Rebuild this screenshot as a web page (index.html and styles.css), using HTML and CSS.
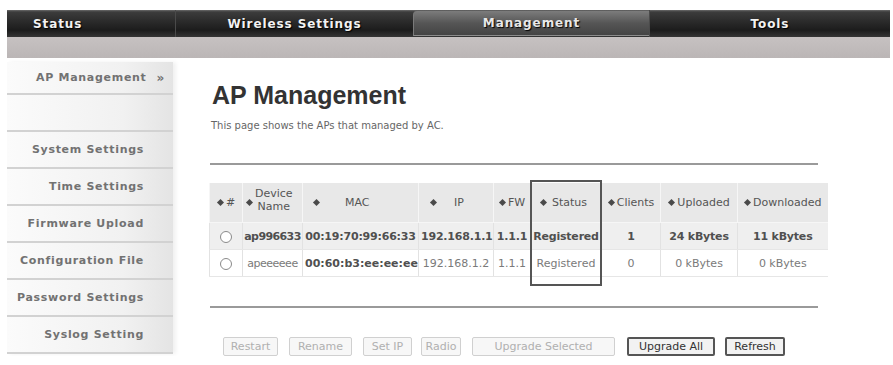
FILE: index.html
```html
<!DOCTYPE html>
<html lang="en">

<head>
    <meta charset="UTF-8">
    <title>AP Management</title>
    <link rel="stylesheet" href="styles.css">
</head>

<body>
    <div class="page">
        <div class="topnav">
            <div class="tab first">Status</div>
            <div class="tab">Wireless Settings</div>
            <div class="tab current">Management</div>
            <div class="tab">Tools</div>
        </div>
        <div class="subbar"></div>

        <div class="layout">
            <div class="sidebar">
                <div class="item active">AP Management <span class="arrows">&raquo;</span></div>
                <div class="item"></div>
                <div class="item">System Settings</div>
                <div class="item">Time Settings</div>
                <div class="item">Firmware Upload</div>
                <div class="item">Configuration File</div>
                <div class="item">Password Settings</div>
                <div class="item">Syslog Setting</div>
            </div>

            <div class="main">
                <h1>AP Management</h1>
                <p class="desc">This page shows the APs that managed by AC.</p>
                <hr class="rule">

                <div class="table-wrap">
                    <table class="aps">
                        <colgroup>
                            <col style="width: 33px;">
                            <col style="width: 60px;">
                            <col style="width: 116px;">
                            <col style="width: 75px;">
                            <col style="width: 37px;">
                            <col style="width: 71px;">
                            <col style="width: 59px;">
                            <col style="width: 77px;">
                            <col style="width: 90px;">
                        </colgroup>
                        <thead>
                            <tr>
                                <th><span class="sort"></span>#</th>
                                <th class="dev"><span class="sort"></span><span class="two">Device<br>Name</span></th>
                                <th class="left mac"><span class="sort"></span>MAC</th>
                                <th class="left ip"><span class="sort"></span>IP</th>
                                <th><span class="sort"></span>FW</th>
                                <th class="left st"><span class="sort"></span>Status</th>
                                <th><span class="sort"></span>Clients</th>
                                <th><span class="sort"></span>Uploaded</th>
                                <th><span class="sort"></span>Downloaded</th>
                            </tr>
                        </thead>
                        <tbody>
                            <tr class="odd">
                                <td><span class="radio"></span></td>
                                <td class="name">ap996633</td>
                                <td class="strong">00:19:70:99:66:33</td>
                                <td>192.168.1.1</td>
                                <td>1.1.1</td>
                                <td>Registered</td>
                                <td>1</td>
                                <td>24 kBytes</td>
                                <td>11 kBytes</td>
                            </tr>
                            <tr class="even">
                                <td><span class="radio"></span></td>
                                <td class="name">apeeeeee</td>
                                <td class="strong">00:60:b3:ee:ee:ee</td>
                                <td>192.168.1.2</td>
                                <td>1.1.1</td>
                                <td>Registered</td>
                                <td>0</td>
                                <td>0 kBytes</td>
                                <td>0 kBytes</td>
                            </tr>
                        </tbody>
                    </table>
                    <div class="highlight"></div>
                </div>

                <hr class="rule bottom">

                <div class="buttons">
                    <button class="btn restart" disabled>Restart</button>
                    <button class="btn rename" disabled>Rename</button>
                    <button class="btn setip" disabled>Set IP</button>
                    <button class="btn radio-btn" disabled>Radio</button>
                    <button class="btn wide" disabled>Upgrade Selected</button>
                    <button class="btn on all">Upgrade All</button>
                    <button class="btn on refresh">Refresh</button>
                </div>
            </div>
        </div>
    </div>
</body>

</html>
```

FILE: styles.css
```css
body {
    margin: 0;
    background: #ffffff;
    font-family: "DejaVu Sans", Verdana, sans-serif;
    color: #555555;
}

.page {
    padding: 10px 3px 0 7px;
}

/* top navigation */
.topnav {
    display: grid;
    grid-template-columns: 168px 238px 236px 241px;
    height: 27px;
    background: linear-gradient(#6a6a6a 0, #3c3c3c 2px, #2c2c2c 40%, #1c1c1c 75%, #353535 100%);
}

.tab {
    display: flex;
    align-items: center;
    justify-content: center;
    color: #f2f2f2;
    font-size: 12px;
    font-weight: bold;
    letter-spacing: 0.9px;
    text-shadow: 1px 1px 1px #000000;
    border-left: 1px solid #4a4a4a;
}

.tab.first {
    justify-content: flex-start;
    padding-left: 26px;
    border-left: none;
}

.tab.current {
    margin-top: 1px;
    height: 24px;
    border-radius: 4px 0 0 0;
    border-left: 1px solid #7a7a7a;
    border-bottom: 1px solid #8c8c8c;
    background: linear-gradient(#7c7c7c, #565656 50%, #444444);
    color: #e8e8e8;
}

.subbar {
    height: 21px;
    background: linear-gradient(#c6c1c1, #bbb6b6);
}

.layout {
    display: flex;
    align-items: flex-start;
}

/* left menu */
.sidebar {
    width: 166px;
    margin-top: 4px;
    flex-shrink: 0;
    box-shadow: 3px 0 4px rgba(0, 0, 0, 0.06);
}

.item {
    height: 35px;
    display: flex;
    align-items: center;
    justify-content: flex-end;
    padding-right: 29px;
    font-size: 11px;
    font-weight: bold;
    letter-spacing: 0.7px;
    color: #727272;
    background: linear-gradient(90deg, #fbfbfb, #f1f1f1 70%, #e4e4e4);
    border-bottom: 2px solid #d2d2d2;
}

.item.active {
    height: 31px;
    padding-right: 8px;
}

.arrows {
    margin-left: 10px;
    font-size: 12px;
}

/* content */
.main {
    padding-left: 37px;
    width: 608px;
}

h1 {
    margin: 22px 0 0 2px;
    font-family: "Liberation Sans", Arial, sans-serif;
    font-size: 25px;
    line-height: 30px;
    color: #333333;
}

.desc {
    margin: 10px 0 0 1px;
    font-size: 10px;
    line-height: 12px;
    color: #666666;
}

.rule {
    margin: 31px 0 0 0;
    height: 2px;
    border: none;
    background: #9a9a9a;
}

.rule.bottom {
    margin-top: 29px;
}

.table-wrap {
    position: relative;
    margin-top: 18px;
    margin-left: -1px;
    width: 618px;
}

.aps {
    border-collapse: collapse;
    table-layout: fixed;
    width: 618px;
    font-size: 11px;
}

.aps th {
    height: 39px;
    padding: 0 2px;
    font-weight: normal;
    color: #555555;
    background: #e8e8e8;
    border-left: 1px solid #f6f6f6;
    border-bottom: 1px solid #f6f6f6;
    white-space: nowrap;
    text-align: center;
}

.aps th.left {
    text-align: left;
}

.aps th.mac {
    padding-left: 10px;
}

.aps th.mac .sort {
    margin-right: 26px;
}

.aps th.ip {
    padding-left: 11px;
}

.aps th.ip .sort {
    margin-right: 18px;
}

.aps th.st {
    padding-left: 9px;
}

.aps th.st .sort {
    margin-right: 6px;
}

.aps th.dev {
    text-align: left;
    padding-left: 3px;
}

.two {
    display: inline-block;
    vertical-align: middle;
    text-align: center;
    line-height: 13px;
    margin-top: -6px;
}

.sort {
    display: inline-block;
    width: 5px;
    height: 5px;
    margin: 0 3px 1px 1px;
    background: #4a4a4a;
    transform: rotate(45deg);
    vertical-align: middle;
}

.aps td {
    height: 26px;
    padding: 0 2px;
    text-align: center;
    white-space: nowrap;
    overflow: hidden;
    border-left: 1px solid #e2e2e2;
    border-bottom: 1px solid #e6e6e6;
}

.aps td.name {
    padding: 0;
    letter-spacing: -0.5px;
}

.aps tr.odd td {
    background: #efefef;
    font-weight: bold;
    color: #505050;
    letter-spacing: -0.2px;
}

.aps tr.odd td.name {
    letter-spacing: -0.6px;
}

.aps tr.even td {
    background: #ffffff;
    color: #7a7a7a;
}

.aps tr.even td.strong {
    font-weight: bold;
    color: #505050;
}

.radio {
    display: inline-block;
    width: 10px;
    height: 10px;
    border: 1px solid #8a8a8a;
    border-radius: 50%;
    background: #ffffff;
    vertical-align: middle;
}

.highlight {
    position: absolute;
    left: 321px;
    top: -3px;
    width: 68px;
    height: 102px;
    border: 2px solid #555555;
}

/* action buttons */
.buttons {
    display: flex;
    margin: 29px 0 0 13px;
}

.btn {
    height: 19px;
    padding: 0;
    margin-right: 11px;
    font-family: "DejaVu Sans", Verdana, sans-serif;
    font-size: 11px;
    color: #b0b0b0;
    background: #f7f7f7;
    border: 1px solid #d0d0d0;
    border-radius: 2px;
}

.btn.restart {
    width: 55px;
}

.btn.rename {
    width: 63px;
}

.btn.setip {
    width: 49px;
    margin-right: 9px;
}

.btn.radio-btn {
    width: 40px;
    margin-right: 11px;
}

.btn.wide {
    width: 143px;
    margin-right: 12px;
}

.btn.on {
    color: #333333;
    background: #f2f2f2;
    border: 2px solid #555555;
    margin-right: 10px;
}

.btn.all {
    width: 88px;
}

.btn.refresh {
    width: 60px;
}
```
